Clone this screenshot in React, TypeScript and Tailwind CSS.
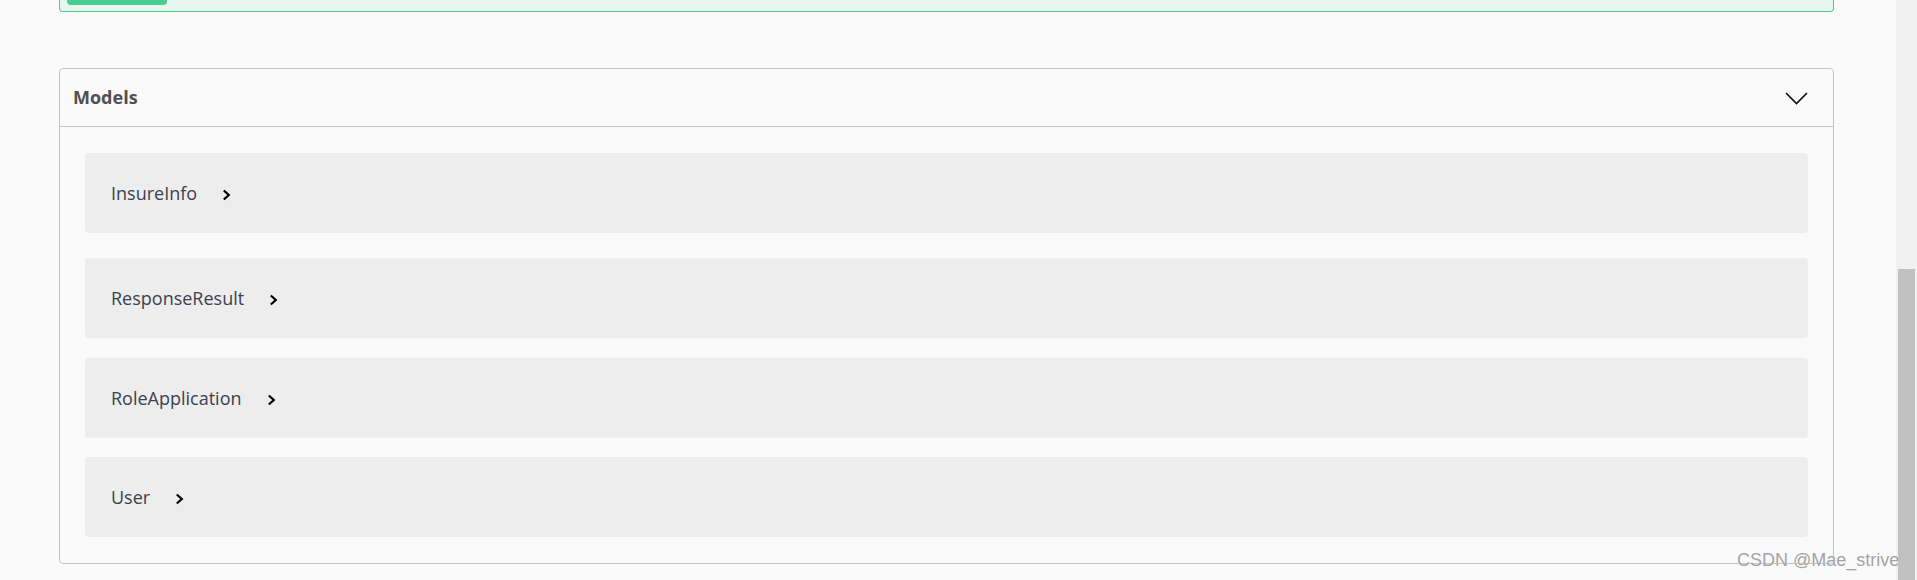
import React from "react";

const models = [
  { name: "InsureInfo", gap: "mt-0" },
  { name: "ResponseResult", gap: "mt-[25px]" },
  { name: "RoleApplication", gap: "mt-[20px]" },
  { name: "User", gap: "mt-[19px]" },
];

function ChevronRight() {
  return (
    <svg width="9" height="12" viewBox="0 0 9 12" className="ml-[25px] mt-[4px] shrink-0">
      <path d="M1.8 1.5 L6.8 6 L1.8 10.5" fill="none" stroke="#000" strokeWidth="2.2" />
    </svg>
  );
}

function ChevronDown() {
  return (
    <svg width="23" height="13" viewBox="0 0 23 13" className="mt-[2px] shrink-0">
      <path d="M1 1 L11.5 11.5 L22 1" fill="none" stroke="#111" strokeWidth="1.7" />
    </svg>
  );
}

export default function App() {
  return (
    <div className="relative h-[580px] w-[1917px] overflow-hidden bg-[#fafafa] font-['Open_Sans',sans-serif]">
      <div className="flex h-full">
        <div className="w-[1896px]">
          {/* tail of the operation block above */}
          <div className="ml-[59px] h-[12px] w-[1775px] rounded-b-[4px] border-x border-b border-[#49cc90] bg-[#e8f6f0]">
            <div className="ml-[7px] h-[5px] w-[100px] rounded-b-[4px] bg-[#49cc90]" />
          </div>

          <section className="ml-[59px] mt-[56px] w-[1775px] rounded-[4px] border border-[#c4c4c4]">
            <div className="flex h-[58px] items-center justify-between border-b border-[#c4c4c4] pl-[13px] pr-[25px]">
              <h4 className="text-[18px] font-bold text-[#505050]">Models</h4>
              <ChevronDown />
            </div>
            <div className="px-[25px] pt-[26px] pb-[26px]">
              {models.map((m) => (
                <div
                  key={m.name}
                  className={`${m.gap} flex h-[80px] items-center rounded-[4px] bg-[#ededed] pl-[26px]`}
                >
                  <span className="text-[18px] font-medium text-[#3b4151]">{m.name}</span>
                  <ChevronRight />
                </div>
              ))}
            </div>
          </section>
        </div>

        {/* scrollbar */}
        <div className="w-[21px] bg-[#f1f1f1] pl-[2px] pr-[2px] pt-[269px]">
          <div className="h-full w-[17px] bg-[#c1c1c1]" />
        </div>
      </div>

      <div className="absolute left-[1737px] top-[549px] font-['Liberation_Sans',sans-serif] text-[18px] leading-[22px] text-[#a3a3a3] [text-shadow:0_0_1px_#fff]">
        CSDN @Mae_strive
      </div>
    </div>
  );
}
